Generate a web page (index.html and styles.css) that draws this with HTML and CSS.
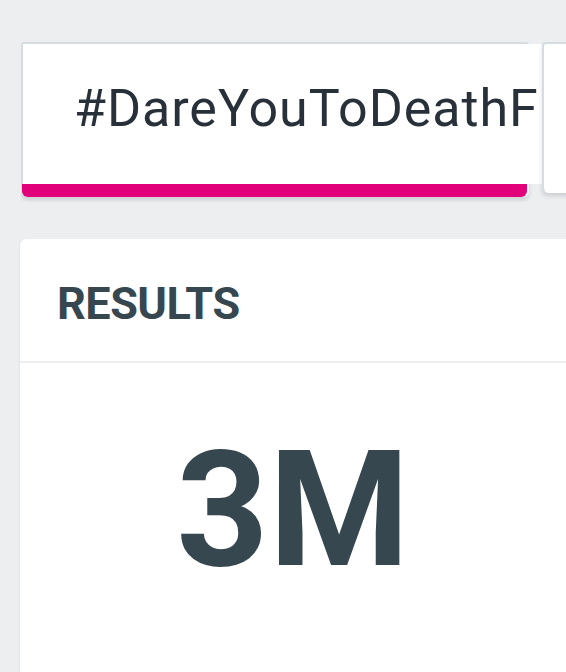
FILE: index.html
```html
<!DOCTYPE html>
<html>
<head>
<meta charset="utf-8">
<link rel="stylesheet" href="styles.css">
</head>
<body>
<div class="page">
  <div class="tabs">
    <div class="tab tab-active">
      <div class="tab-label">#DareYouToDeathFight</div>
      <div class="tab-bar"></div>
    </div>
    <div class="tab tab-next"></div>
  </div>
  <div class="results">
    <div class="results-head">RESULTS</div>
    <div class="results-body">3M</div>
  </div>
</div>
</body>
</html>
```
FILE: styles.css
```css
html, body {
  margin: 0;
  padding: 0;
  background: #eceef0;
  font-family: Roboto, "Liberation Sans", sans-serif;
  overflow: hidden;
}
.page {
  padding: 42px 0 0 20px;
  height: 630px;
}
.tabs {
  display: flex;
  height: 160px;
  margin-left: 1px;
  overflow: hidden;
}
.tab {
  flex: none;
  background: #ffffff;
  border-top: 2px solid #d6dde2;
  border-left: 2px solid #d6dde2;
  border-radius: 4px 4px 6px 6px;
  box-shadow: 0 3px 4px rgba(60, 70, 80, 0.18);
}
.tab-active {
  width: 506px;
  height: 153px;
  display: flex;
  flex-direction: column;
}
.tab-label {
  flex: 1;
  width: calc(100% + 13px);
  box-sizing: border-box;
  background: #ffffff;
  overflow: hidden;
  white-space: nowrap;
  display: flex;
  align-items: center;
  padding-left: 51px;
  padding-bottom: 10px;
  font-size: 52px;
  letter-spacing: 0.95px;
  line-height: 1;
  color: #283139;
}
.tab-bar {
  height: 13px;
  background: #e2007a;
  border-radius: 0 0 6px 6px;
  margin-left: -1px;
  width: 505px;
}
.tab-next {
  width: 60px;
  height: 149px;
  margin-left: 13px;
}
.results {
  margin-top: 37px;
  width: 546px;
  height: 440px;
  background: #ffffff;
  border-radius: 6px 0 0 0;
  box-shadow: -1px 0 2px rgba(0, 0, 0, 0.04);
}
.results-head {
  height: 124px;
  box-sizing: border-box;
  padding: 6px 0 0 37px;
  display: flex;
  align-items: center;
  font-size: 45px;
  letter-spacing: -0.5px;
  font-weight: 700;
  line-height: 1;
  color: #37474f;
  border-bottom: 2px solid #eceef0;
}
.results-body {
  padding-top: 67px;
  text-align: center;
  font-size: 161px;
  font-weight: 700;
  line-height: 1;
  color: #37474f;
}
```
